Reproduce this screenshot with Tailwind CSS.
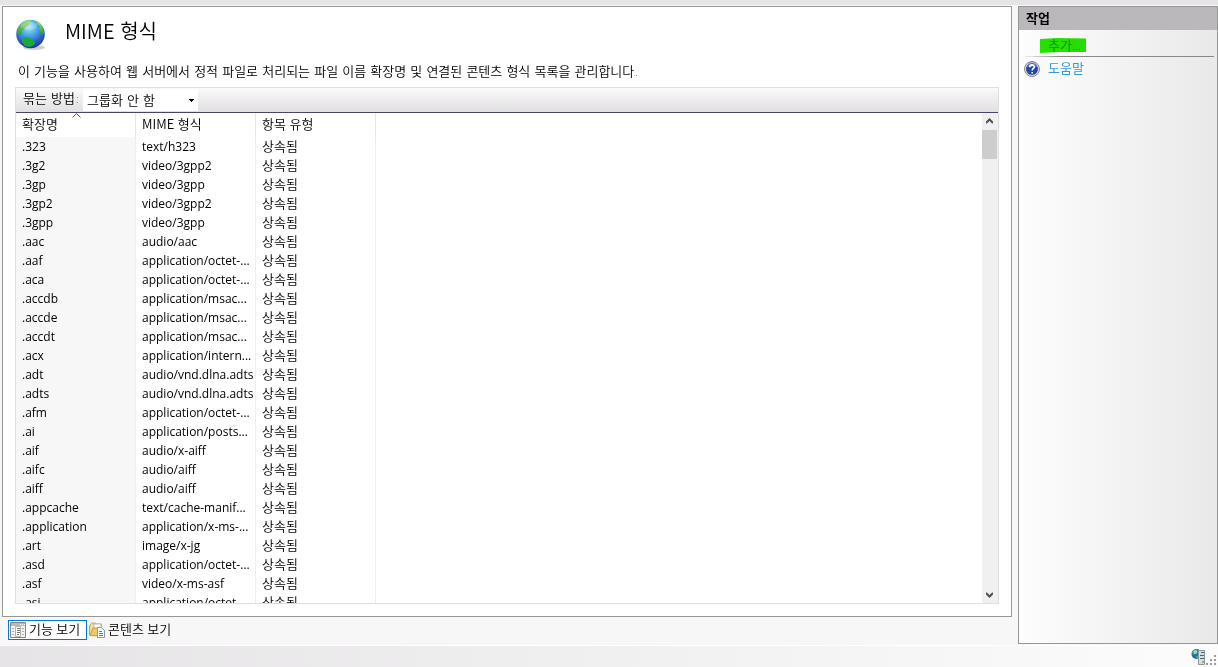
<!DOCTYPE html>
<html lang="ko">
<head>
    <meta charset="UTF-8">
    <meta name="viewport" content="width=device-width, initial-scale=1.0">
    <title>MIME 형식</title>
    <script src="https://cdn.jsdelivr.net/npm/@tailwindcss/browser@4"></script>
</head>
<body class="h-screen flex flex-col overflow-hidden bg-[#f7f7f7] font-['Open_Sans','Noto_Sans_CJK_KR',sans-serif] text-[13px] leading-[19px] text-black">
    <div class="h-[5px] shrink-0 bg-[#e6e4e6]"></div>

    <div class="flex-1 min-h-0 flex gap-[6px] pt-px pl-[2px]">
        <div class="flex-1 min-w-0 flex flex-col">
            <main class="flex-1 min-h-0 flex flex-col bg-white border border-[#979797] px-3 pb-3">
                <header class="flex items-center h-12 pl-px">
                    <svg class="w-8 h-8 mt-2" viewBox="0 0 32 32">
                        <defs>
                            <radialGradient id="sea" cx="45%" cy="25%" r="78%">
                                <stop offset="0" stop-color="#a8e8fa"/>
                                <stop offset=".35" stop-color="#4fb0e6"/>
                                <stop offset=".7" stop-color="#2c62cc"/>
                                <stop offset="1" stop-color="#16308c"/>
                            </radialGradient>
                            <linearGradient id="land" x1="0" y1="0" x2="0" y2="1">
                                <stop offset="0" stop-color="#a5dd6b"/>
                                <stop offset="1" stop-color="#239b32"/>
                            </linearGradient>
                        </defs>
                        <ellipse cx="18" cy="28.500" rx="11" ry="2.500" fill="#bbb" opacity=".7"/>
                        <circle cx="14.500" cy="15" r="14.300" fill="url(#sea)"/>
                        <path d="M1 12C2 8 5 4 9 2l5-1 1 2-2 1v2l-3 1-2 3-2 1-1 4-2 1-2-1z" fill="url(#land)"/>
                        <path d="M20 2l4 2 3 5 1 5-2 2-2-2-1-4 1-3-3-2z" fill="url(#land)"/>
                        <path d="M6 20l3-2 5 1 5 4-1 3-4 2-5-1-3-4z" fill="#1fa83a"/>
                        <ellipse cx="13" cy="7" rx="8" ry="4" fill="#fff" opacity=".2"/>
                    </svg>
                    <h1 class="ml-[17px] text-[20px] leading-6 font-['Noto_Sans_CJK_KR',sans-serif] font-[350]">MIME 형식</h1>
                </header>
                <p class="h-8 pl-[3px] pt-[7px] whitespace-nowrap font-['DejaVu_Sans','Noto_Sans_CJK_KR',sans-serif] font-[350]">이 기능을 사용하여 웹 서버에서 정적 파일로 처리되는 파일 이름 확장명 및 연결된 콘텐츠 형식 목록을 관리합니다.</p>

                <section class="flex-1 min-h-0 flex flex-col border border-[#dfdfdf]">
                    <div class="flex h-[25px] shrink-0 pt-px bg-linear-to-b from-[#fbfafb] to-[#e1dfe1] border-b border-[#46436e] font-['DejaVu_Sans','Noto_Sans_CJK_KR',sans-serif] font-[350]">
                        <label for="group" class="w-[67px] pl-[7px] leading-[20px] whitespace-nowrap">묶는 방법:</label>
                        <div class="relative w-[115px]">
                            <select id="group" class="w-full h-[22px] pl-1 appearance-none bg-white outline-none">
                                <option>그룹화 안 함</option>
                            </select>
                            <svg class="absolute right-1 top-2 w-[5px] h-[6px] pointer-events-none" viewBox="0 0 5 6"><path d="M0 2h5v1H4v1H3v1H2V4H1V3H0z"/></svg>
                        </div>
                    </div>
                    <div class="flex-1 min-h-0 flex">
                        <div class="flex-1 min-w-0 overflow-hidden font-['Noto_Sans_CJK_KR',sans-serif] font-[350]">
                            <table class="table-fixed w-[360px] border-separate border-spacing-0">
                                <thead>
                                    <tr class="h-6 text-left leading-[20px]">
                                        <th class="relative w-[120px] pl-[6px] pb-[2px] border-r border-[#e5e5e5] font-[350]">확장명
                                            <svg class="absolute left-14 top-0 w-[9px] h-[5px]" viewBox="0 0 9 5" fill="none" stroke="#555"><path d="M.5 4.500l4-4 4 4"/></svg>
                                        </th>
                                        <th class="w-[120px] pl-[6px] pb-[2px] border-r border-[#e5e5e5] font-[350]">MIME 형식</th>
                                        <th class="w-[120px] pl-[6px] pb-[2px] border-r border-[#e5e5e5] font-[350]">항목 유형</th>
                                    </tr>
                                </thead>
                                <tbody id="rows"></tbody>
                            </table>
                        </div>
                        <div class="w-4 pr-px shrink-0 flex flex-col items-center bg-[#f0f0f0]">
                            <button class="h-[17px]" aria-label="위로"><svg class="w-[7px] h-[7px]" viewBox="0 0 7 7" fill="none" stroke="#505050" stroke-width="2"><path d="M0 5l3.500-3.500L7 5"/></svg></button>
                            <div class="w-[15px] h-[29px] bg-[#cdcdcd]"></div>
                            <button class="h-[17px] mt-auto" aria-label="아래로"><svg class="w-[7px] h-[7px]" viewBox="0 0 7 7" fill="none" stroke="#505050" stroke-width="2"><path d="M0 2l3.500 3.500L7 2"/></svg></button>
                        </div>
                    </div>
                </section>
            </main>

            <nav class="flex h-7 shrink-0 items-start pl-[6px] pt-[3px] leading-4 font-[350]">
                <button class="flex items-center h-5 w-[79px] pl-px gap-[3px] border border-[#0078d7] bg-white whitespace-nowrap">
                    <svg class="w-4 h-4 shrink-0" viewBox="0 0 16 16">
                        <path d="M.5.5h15v15H.5z" fill="#f4f3ef" stroke="#85857e"/>
                        <path d="M1 1h14v3H1z" fill="#b7b9bc"/>
                        <path d="M10 2h1v1h-1zM12 2h1v1h-1zM14 2h1v1h-1z" fill="#fff"/>
                        <path d="M2 6h2v1H2zM2 9h2v1H2zM2 12h2v1H2zM12 6h2v1h-2zM12 9h2v1h-2zM12 12h2v1h-2z" fill="#a9adb2"/>
                        <path d="M5.500 4.500h5v10h-5z" fill="#fffdf5" stroke="#b2b2aa"/>
                        <path d="M7 6h3v1H7zM7 8h3v1H7zM7 10h3v1H7zM7 12h2v1H7z" fill="#777"/>
                    </svg>
                    <span class="pb-[2px]">기능 보기</span>
                </button>
                <button class="flex items-center h-5 pl-[2px] gap-[3px] whitespace-nowrap">
                    <svg class="w-4 h-4 shrink-0" viewBox="0 0 16 16">
                        <path d="M.5 13V4l2-3h4l1 1h5v11z" fill="#eedda0" stroke="#c5a35b"/>
                        <path d="M5 2h7v5H5z" fill="#fffdf3" stroke="#bbb"/>
                        <path d="M1 13.500L4 6h8l-2 8z" fill="#efc966" stroke="#c49c49"/>
                        <path d="M8.500 5.500h4l3 3v7h-7z" fill="#f8fcff" stroke="#8499ad"/>
                        <path d="M10 9h3v1h-3zM10 11h4v1h-4zM10 13h4v1h-4z" fill="#447fb4"/>
                    </svg>
                    <span class="pb-[2px]">콘텐츠 보기</span>
                </button>
            </nav>
        </div>

        <aside class="w-[200px] shrink-0 mb-px border border-[#979797] bg-linear-to-r from-[#fdfdfd] to-[#e9e9e9]">
            <h2 class="h-[23px] pl-[7px] leading-[22px] font-bold bg-[#bbb8bb]">작업</h2>
            <div class="h-[26px] pl-[29px] pt-[6px]">
                <a href="#" class="relative block w-fit leading-[18px] font-[350] text-[#3399dd]">추가...
                    <svg class="absolute -left-2 top-[2px] w-[46px] h-[15px] mix-blend-multiply" viewBox="0 0 46 15"><path d="M0 1L17 0l29 .500V14H20L0 15z" fill="#26e600"/></svg>
                </a>
            </div>
            <div class="h-px ml-[2px] mr-[3px] bg-linear-to-r from-transparent via-[#8a8789] via-20% to-[#8a8789]"></div>
            <div class="flex items-center gap-2 pl-[5px] pt-[2px]">
                <svg class="w-4 h-4" viewBox="0 0 16 16">
                    <circle cx="8" cy="8" r="7.500" fill="#ddd" stroke="#888"/>
                    <circle cx="8" cy="8" r="6" fill="#2447a8"/>
                    <path d="M3 6a5 5 0 0 1 10 0z" fill="#718dda" opacity=".6"/>
                    <path d="M5.800 6.200c0-3 4.600-3 4.600-.400 0 1.600-2.200 1.700-2.200 3.600M8.200 11v1.600" fill="none" stroke="#fff" stroke-width="1.600"/>
                </svg>
                <a href="#" class="text-[#3399dd]">도움말</a>
            </div>
        </aside>
    </div>

    <footer class="flex justify-end shrink-0 h-[22px] pt-[2px] pr-[2px] border-t border-white bg-linear-to-r from-[#e6e4e6] to-[#fcfcfc]">
        <svg class="w-[25px] h-[18px]" viewBox="0 0 25 18">
            <circle cx="5.500" cy="6" r="5" fill="#2565bd"/>
            <path d="M1 5C2 2 4 1 6 1L5 5 3 7zM5 8l4-1 1 2-4 2z" fill="#32b85a"/>
            <circle cx="4.500" cy="4" r="2" fill="#b4f0ee" opacity=".7"/>
            <path d="M7.500 2.500h6v14h-6z" fill="#d7dde1" stroke="#8b969e"/>
            <path d="M10 4h3v1h-3zM9 7h4v1H9zM9 10h4v1H9z" fill="#56636d"/>
            <path d="M11 13h2v2h-2z" fill="#8c0"/>
            <path d="M23 7h2v2h-2zM19 11h2v2h-2zM23 11h2v2h-2zM15 15h2v2h-2zM19 15h2v2h-2zM23 15h2v2h-2z" fill="#9a9a9a"/>
        </svg>
    </footer>

    <script>
        const types = [
            ['.323', 'text/h323'],
            ['.3g2', 'video/3gpp2'],
            ['.3gp', 'video/3gpp'],
            ['.3gp2', 'video/3gpp2'],
            ['.3gpp', 'video/3gpp'],
            ['.aac', 'audio/aac'],
            ['.aaf', 'application/octet-...'],
            ['.aca', 'application/octet-...'],
            ['.accdb', 'application/msac...'],
            ['.accde', 'application/msac...'],
            ['.accdt', 'application/msac...'],
            ['.acx', 'application/intern...'],
            ['.adt', 'audio/vnd.dlna.adts'],
            ['.adts', 'audio/vnd.dlna.adts'],
            ['.afm', 'application/octet-...'],
            ['.ai', 'application/posts...'],
            ['.aif', 'audio/x-aiff'],
            ['.aifc', 'audio/aiff'],
            ['.aiff', 'audio/aiff'],
            ['.appcache', 'text/cache-manif...'],
            ['.application', 'application/x-ms-...'],
            ['.art', 'image/x-jg'],
            ['.asd', 'application/octet-...'],
            ['.asf', 'video/x-ms-asf'],
            ['.asi', 'application/octet-...']
        ];
        document.getElementById('rows').innerHTML = types.map(([ext, mime]) => `
            <tr class="h-[19px] leading-[17px] whitespace-nowrap">
                <td class="pl-[6px] pb-px font-['Open_Sans',sans-serif] font-normal text-[12px] bg-[#f7f7f7] border-r border-[#e6f0fa]">${ext}</td>
                <td class="pl-[6px] pb-px font-['Open_Sans',sans-serif] font-normal text-[12px] border-r border-[#e6f0fa]">${mime}</td>
                <td class="pl-[6px] pb-[2px] border-r border-[#e6f0fa]">상속됨</td>
            </tr>`).join('');
    </script>
</body>
</html>
